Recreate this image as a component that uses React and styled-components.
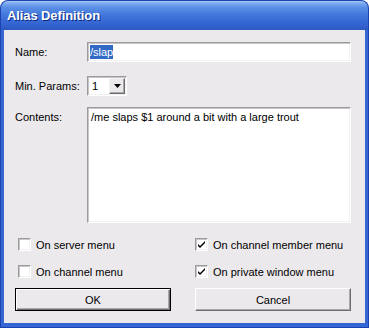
import React from "react";
import styled, { createGlobalStyle } from "styled-components";

const Global = createGlobalStyle`
  html, body { margin: 0; padding: 0; background: #ffffff; }
  body { font-family: Tahoma, "Liberation Sans", Arial, sans-serif; font-size: 11px; color: #000; }
`;

const Window = styled.div`
  width: 369px;
  height: 328px;
  display: flex;
  flex-direction: column;
  box-sizing: border-box;
`;

const TitleBar = styled.div`
  height: 30px;
  flex: none;
  box-sizing: border-box;
  border-radius: 8px 8px 0 0;
  border: 1px solid #1c44b0;
  border-bottom: none;
  background: linear-gradient(
    to bottom,
    #a7c8f6 0%,
    #7eaaf0 8%,
    #5a8fe6 22%,
    #4479dc 45%,
    #3a6bd5 65%,
    #3361cd 85%,
    #2c58c2 100%
  );
  display: flex;
  align-items: center;
  padding: 0 0 0 6px;
`;

const Title = styled.span`
  font-family: "Trebuchet MS", "Liberation Sans", Arial, sans-serif;
  font-weight: bold;
  font-size: 13px;
  color: #ffffff;
  text-shadow: 1px 1px 0 #0a2a80;
  letter-spacing: -0.1px;
`;

const Frame = styled.div`
  flex: 1;
  display: flex;
  box-sizing: border-box;
  background: #3566d4;
  padding: 0 4px 4px 3px;
  border: 1px solid #1c44b0;
  border-top: none;
`;

const Client = styled.div`
  flex: 1;
  background: #ece9ec;
  display: flex;
  flex-direction: column;
  padding: 12px 14px 12px 11px;
  box-sizing: border-box;
`;

const FieldRow = styled.div`
  display: flex;
  align-items: ${(p) => (p.$top ? "flex-start" : "center")};
  margin-top: ${(p) => p.$gap || 0}px;
`;

const Label = styled.div`
  width: 72px;
  flex: none;
  padding-top: ${(p) => (p.$top ? "4px" : "0")};
`;

const sunken = `
  box-sizing: border-box;
  background: #ffffff;
  border: 1px solid;
  border-color: #9d9a9d #ffffff #ffffff #9d9a9d;
  box-shadow: inset 1px 1px 0 #c8c6c8, inset -1px -1px 0 #f2f1f2;
`;

const TextBox = styled.div`
  ${sunken}
  flex: 1;
  height: ${(p) => p.$h}px;
  padding: ${(p) => (p.$multi ? "3px 3px" : "0 2px")};
  display: flex;
  align-items: ${(p) => (p.$multi ? "flex-start" : "center")};
`;

const Selected = styled.span`
  background: #316ac5;
  color: #ffffff;
  padding: 1px 0;
`;

const Combo = styled.div`
  ${sunken}
  width: 40px;
  height: 20px;
  display: flex;
  align-items: center;
  padding: 1px;
`;

const ComboValue = styled.span`
  flex: 1;
  padding-left: 3px;
`;

const DropButton = styled.div`
  width: 16px;
  height: 16px;
  box-sizing: border-box;
  background: #ece9ec;
  border: 1px solid;
  border-color: #f4f3f4 #6f6d6f #6f6d6f #f4f3f4;
  box-shadow: inset -1px -1px 0 #a9a7a9;
  display: flex;
  align-items: center;
  justify-content: center;
`;

const Checks = styled.div`
  display: grid;
  grid-template-columns: 177px 1fr;
  row-gap: 14px;
  padding-left: 3px;
  margin-top: 15px;
`;

const CheckItem = styled.label`
  display: flex;
  align-items: center;
  gap: 5px;
  height: 13px;
`;

const Box = styled.span`
  ${sunken}
  width: 13px;
  height: 13px;
  flex: none;
  display: flex;
  align-items: center;
  justify-content: center;
`;

const Buttons = styled.div`
  display: grid;
  grid-template-columns: 156px 156px;
  column-gap: 24px;
  margin-top: 10px;
`;

const Button = styled.div`
  height: 23px;
  box-sizing: border-box;
  display: flex;
  align-items: center;
  justify-content: center;
  background: #ece9ec;
  border: 1px solid;
  border-color: ${(p) => (p.$default ? "#000000" : "#ffffff #6f6d6f #6f6d6f #ffffff")};
  box-shadow: ${(p) =>
    p.$default
      ? "inset 1px 1px 0 #ffffff, inset -1px -1px 0 #6f6d6f, inset -2px -2px 0 #a9a7a9"
      : "inset -1px -1px 0 #a9a7a9"};
`;

const Check = ({ checked, children }) => (
  <CheckItem>
    <Box>
      {checked && (
        <svg width="9" height="9" viewBox="0 0 9 9">
          <path d="M1 4 L3 6 L8 1 L8 3 L3 8 L1 6 Z" fill="#000" />
        </svg>
      )}
    </Box>
    {children}
  </CheckItem>
);

export default function App() {
  return (
    <>
      <Global />
      <Window>
        <TitleBar>
          <Title>Alias Definition</Title>
        </TitleBar>
        <Frame>
          <Client>
            <FieldRow>
              <Label>Name:</Label>
              <TextBox $h={20}>
                <Selected>/slap</Selected>
              </TextBox>
            </FieldRow>
            <FieldRow $gap={14}>
              <Label>Min. Params:</Label>
              <Combo>
                <ComboValue>1</ComboValue>
                <DropButton>
                  <svg width="7" height="4" viewBox="0 0 7 4">
                    <path d="M0 0 H7 L3.5 4 Z" fill="#000" />
                  </svg>
                </DropButton>
              </Combo>
            </FieldRow>
            <FieldRow $gap={11} $top>
              <Label $top>Contents:</Label>
              <TextBox $h={116} $multi>
                /me slaps $1 around a bit with a large trout
              </TextBox>
            </FieldRow>
            <Checks>
              <Check>On server menu</Check>
              <Check checked>On channel member menu</Check>
              <Check>On channel menu</Check>
              <Check checked>On private window menu</Check>
            </Checks>
            <Buttons>
              <Button $default>OK</Button>
              <Button>Cancel</Button>
            </Buttons>
          </Client>
        </Frame>
      </Window>
    </>
  );
}
